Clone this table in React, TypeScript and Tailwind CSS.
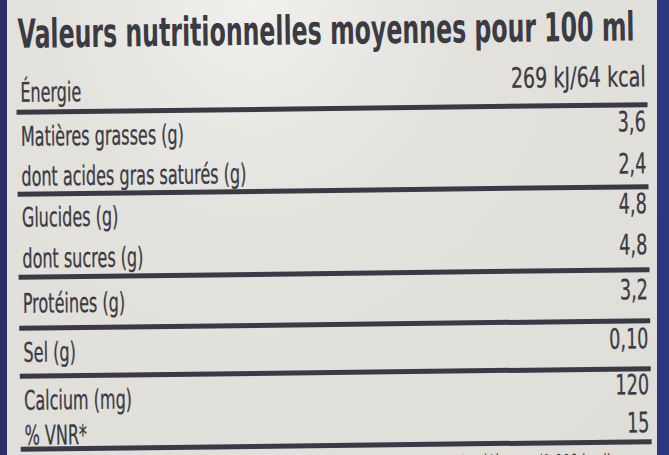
const font = { fontFamily: '"DejaVu Sans Condensed", "DejaVu Sans", sans-serif' };

type RowProps = {
  label: string;
  value: string;
  h: string;
  vp: string;
  lp: string;
  vs?: string;
};

function Row({ label, value, h, vp, lp, vs = 'scale-x-[0.7]' }: RowProps) {
  return (
    <div className={`flex justify-between ${h}`}>
      <span className={`${lp} inline-block origin-left scale-x-[0.66] whitespace-nowrap text-[27px] leading-none [-webkit-text-stroke:0.3px_#3b3b43]`}>
        {label}
      </span>
      <span className={`${vp} ${vs} inline-block origin-right whitespace-nowrap text-[28px] leading-none [-webkit-text-stroke:0.3px_#3b3b43]`}>
        {value}
      </span>
    </div>
  );
}

export default function App() {
  return (
    <div
      className="flex h-[455px] w-[669px] overflow-hidden bg-[radial-gradient(ellipse_at_38%_0%,#f1f0ed_0%,#e4e2dd_35%,#dfddd8_100%)] text-[#3b3b43]"
      style={font}
    >
      {/* left carton edge */}
      <div className="w-[7px] shrink-0 bg-[#2a2d68]" />

      {/* the label is photographed slightly tilted */}
      <div className="ml-[11px] w-[631px] shrink-0 -rotate-[0.7deg]">
        {/* title */}
        <div className="h-[55px] pl-[2px] pt-[10px]">
          <h1 className="inline-block origin-left scale-x-[0.657] whitespace-nowrap text-[40px] font-bold leading-none">
            Valeurs nutritionnelles moyennes pour 100 ml
          </h1>
        </div>

        <div className="border-b-[5px] border-[#3a3946] pl-[4px] pr-[2px]">
          <Row label="Énergie" value="269 kJ/64 kcal" h="h-[51px]" vp="pt-[12px]" lp="pt-[20px]" vs="scale-x-[0.76]" />
        </div>

        <div className="border-b-[5px] border-[#3a3946] pl-[4px] pr-[2px]">
          <Row label="Matières grasses (g)" value="3,6" h="h-[42px]" vp="pt-[1px]" lp="pt-[8px]" />
          <Row label="dont acides gras saturés (g)" value="2,4" h="h-[35px]" vp="pt-[1px]" lp="pt-[6px]" />
        </div>

        <div className="border-b-[5px] border-[#3a3946] pl-[4px] pr-[2px]">
          <Row label="Glucides (g)" value="4,8" h="h-[41px]" vp="pt-[1px]" lp="pt-[7px]" />
          <Row label="dont sucres (g)" value="4,8" h="h-[37px]" vp="pt-[1px]" lp="pt-[7px]" />
        </div>

        <div className="border-b-[5px] border-[#3a3946] pl-[4px] pr-[2px]">
          <Row label="Protéines (g)" value="3,2" h="h-[46px]" vp="pt-[4px]" lp="pt-[10px]" />
        </div>

        <div className="border-b-[5px] border-[#3a3946] pl-[4px] pr-[2px]">
          <Row label="Sel (g)" value="0,10" h="h-[43px]" vp="pt-[2px]" lp="pt-[8px]" />
        </div>

        <div className="border-b-[5px] border-[#3a3946] pl-[4px] pr-[2px]">
          <Row label="Calcium (mg)" value="120" h="h-[38px]" vp="pt-[0px]" lp="pt-[8px]" />
          <Row label="% VNR*" value="15" h="h-[30px]" vp="pt-[0px]" lp="pt-[5px]" />
        </div>

        <div className="flex justify-end pr-[40px] pt-[7px]">
          <span className="inline-block origin-right scale-x-[0.62] whitespace-nowrap text-[22px] leading-none">
            *Valeurs nutritionnelles de référence (2 000 kcal)
          </span>
        </div>
      </div>

      <div className="flex-1" />
      {/* right carton edge */}
      <div className="w-[12px] shrink-0 bg-[#2c377f]" />
    </div>
  );
}
